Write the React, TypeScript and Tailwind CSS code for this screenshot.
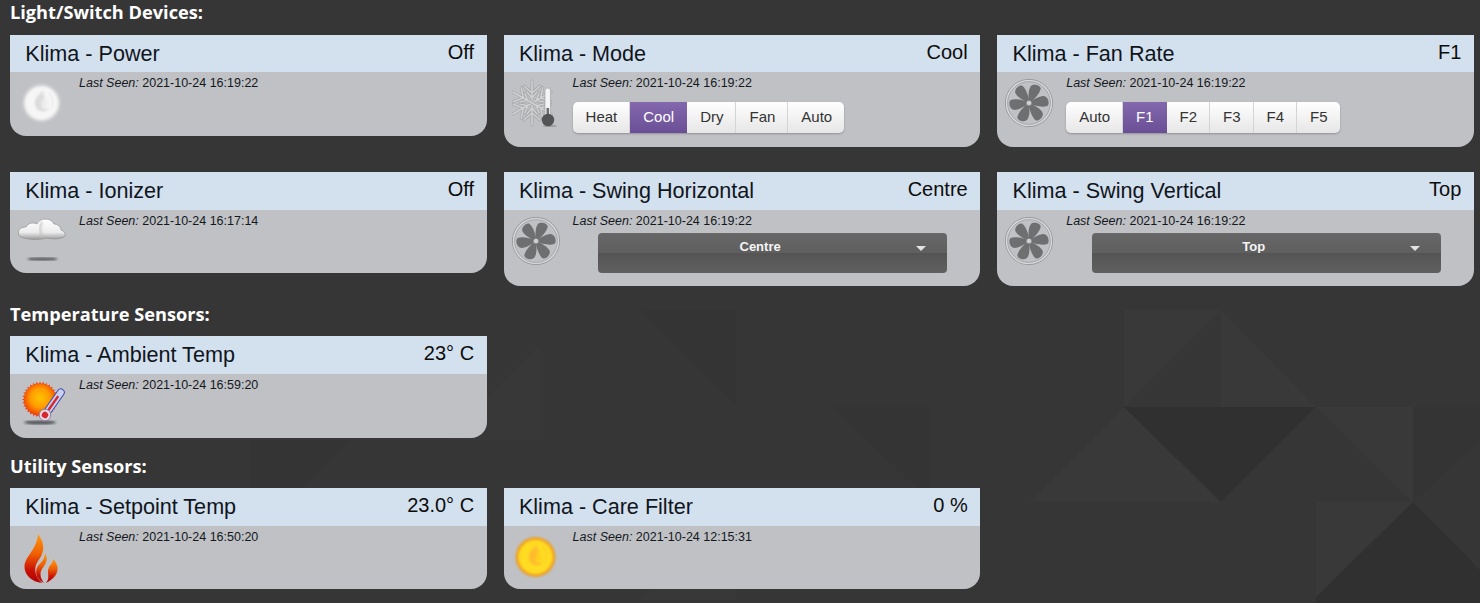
import type { ReactNode } from 'react';

function PageBackground() {
  return (
    <svg className="absolute inset-0 h-full w-full" viewBox="0 0 1480 603" preserveAspectRatio="none">
      <g fill="#393939">
        <path d="M1030 502 L1124 407 L1221 502 Z" />
        <path d="M1221 310 L1316 407 L1221 407 Z" />
        <path d="M1316 502 L1413 502 L1316 597 Z" />
        <path d="M1124 407 L1221 310 L1124 310 Z" />
        <path d="M1316 407 L1413 407 L1413 502 Z" />
      </g>
      <g fill="#383838">
        <path d="M640 600 L736 505 L736 600 Z" />
        <path d="M445 440 L540 345 L540 440 Z" />
      </g>
      <g fill="#303030">
        <path d="M1124 407 L1316 407 L1221 502 Z" />
        <path d="M1316 597 L1413 502 L1480 570 L1480 603 L1316 603 Z" />
      </g>
      <g fill="#343434">
        <path d="M1413 407 L1480 407 L1480 440 L1413 502 Z" />
        <path d="M640 310 L736 310 L736 405 Z" />
        <path d="M830 405 L930 405 L930 500 Z" />
        <path d="M250 440 L350 440 L250 540 Z" />
      </g>
    </svg>
  );
}

function OrbIcon({ id, light, mid, edge, swirl }: { id: string; light: string; mid: string; edge: string; swirl: string }) {
  return (
    <svg viewBox="0 0 48 48" className="h-12 w-12">
      <defs>
        <radialGradient id={`${id}-g`} cx="50%" cy="50%" r="50%">
          <stop offset="0%" stopColor={mid} />
          <stop offset="45%" stopColor={light} />
          <stop offset="85%" stopColor={light} />
          <stop offset="100%" stopColor={edge} />
        </radialGradient>
        <filter id={`${id}-b`}>
          <feGaussianBlur stdDeviation="0.9" />
        </filter>
      </defs>
      <circle cx="23.5" cy="24" r="20" fill={edge} opacity="0.7" filter={`url(#${id}-b)`} />
      <circle cx="23.5" cy="24" r="18.5" fill={`url(#${id}-g)`} filter={`url(#${id}-b)`} />
      <path
        d="M25 12 C19 16 15 22 18 28 C20 33 27 35 32 29 C28 31 23 30 22 25 C22 21 28 20 26 16 Z"
        fill={swirl}
        opacity="0.5"
        filter={`url(#${id}-b)`}
      />
      <path d="M31 14 C35 19 36 24 34 28" fill="none" stroke={swirl} strokeWidth="1.2" opacity="0.35" filter={`url(#${id}-b)`} />
    </svg>
  );
}

function FanIcon() {
  const angles = [-35, 25, 85, 145, 205, 265];
  return (
    <svg viewBox="0 0 48 48" className="h-12 w-12">
      <circle cx="24" cy="24" r="23.6" fill="none" stroke="#8f9092" strokeWidth="0.8" />
      <circle cx="24" cy="24" r="22.4" fill="none" stroke="#d8d9da" strokeWidth="1.4" />
      <circle cx="24" cy="24" r="21.4" fill="none" stroke="#949597" strokeWidth="0.6" />
      {angles.map((a) => (
        <path
          key={a}
          d="M24 24 C21.5 20 17.5 13 18.5 8 C19.5 4.5 26.5 3 28.5 6 C30 11 27 19 24.8 24 Z"
          fill="#6e6f71"
          transform={`rotate(${a} 24 24)`}
        />
      ))}
      <circle cx="24" cy="24" r="2.6" fill="#cfd0d2" stroke="#808183" strokeWidth="0.5" />
    </svg>
  );
}

function SnowThermoIcon() {
  const arms = [0, 60, 120];
  return (
    <svg viewBox="0 0 48 48" className="h-12 w-12">
      <g fill="none" strokeLinecap="round">
        {arms.map((a) => (
          <g key={a} transform={`rotate(${a} 20 24)`}>
            <path d="M20 2 V46 M12 7 L20 14 L28 7 M12 41 L20 34 L28 41 M15 13 L20 19 L25 13 M15 35 L20 29 L25 35" stroke="#a7a8aa" strokeWidth="3" />
            <path d="M20 2 V46 M12 7 L20 14 L28 7 M12 41 L20 34 L28 41 M15 13 L20 19 L25 13 M15 35 L20 29 L25 35" stroke="#cfd0d1" strokeWidth="1.5" />
          </g>
        ))}
      </g>
      <ellipse cx="38" cy="47" rx="7" ry="1" fill="#9a9b9d" />
      <rect x="33" y="9" width="5.5" height="32" rx="2.7" fill="#f4f4f4" stroke="#9c9d9f" strokeWidth="0.6" />
      <rect x="34.5" y="29" width="2.6" height="10" fill="#6a6b6d" />
      <circle cx="36" cy="41" r="6.2" fill="#535456" />
    </svg>
  );
}

function CloudIcon() {
  return (
    <svg viewBox="0 0 48 48" className="h-12 w-12">
      <defs>
        <linearGradient id="cloud-g" x1="0" y1="0" x2="0" y2="1">
          <stop offset="0%" stopColor="#ffffff" />
          <stop offset="65%" stopColor="#ececec" />
          <stop offset="100%" stopColor="#9c9c9c" />
        </linearGradient>
        <filter id="cloud-b">
          <feGaussianBlur stdDeviation="1.1" />
        </filter>
      </defs>
      <path
        d="M0.5 16 C0 12 4 10 8 10 C10 6 15 5 19 7 C21 1 33 0 36 7 C40 7 43 10 43 13 C46 14 48 17 47 19 C43 23 33 22 29 21 C23 23 9 23 3 20 C1.5 19 0.5 18 0.5 16 Z"
        fill="url(#cloud-g)"
        stroke="#8a8a8a"
        strokeWidth="0.6"
      />
      <path d="M24 5 C21 10 22 17 25 21" fill="none" stroke="#bdbdbd" strokeWidth="1.6" filter="url(#cloud-b)" />
      <ellipse cx="24.5" cy="42" rx="15" ry="1.6" fill="#555555" filter="url(#cloud-b)" />
    </svg>
  );
}

function SunThermoIcon() {
  const rays = Array.from({ length: 32 }, (_, i) => (i * 360) / 32);
  return (
    <svg viewBox="0 0 48 48" className="h-12 w-12">
      <defs>
        <radialGradient id="sun-g" cx="50%" cy="45%" r="55%">
          <stop offset="0%" stopColor="#ffc400" />
          <stop offset="55%" stopColor="#ff9a00" />
          <stop offset="100%" stopColor="#ee3c06" />
        </radialGradient>
        <filter id="sun-b">
          <feGaussianBlur stdDeviation="1" />
        </filter>
      </defs>
      <ellipse cx="22" cy="41.5" rx="16" ry="2" fill="#55575a" filter="url(#sun-b)" />
      {rays.map((r) => (
        <path key={r} d="M22 0.5 L23.5 4 L20.5 4 Z" fill="#f52c10" transform={`rotate(${r} 22 18.5)`} />
      ))}
      <circle cx="22" cy="18.5" r="16.2" fill="url(#sun-g)" />
      <g transform="rotate(35 27 34)">
        <rect x="23.5" y="3" width="7" height="28" rx="3.5" fill="#c9d0ee" stroke="#3d48a8" strokeWidth="1" />
        <rect x="25.8" y="11" width="2.4" height="20" fill="#d8272c" />
        <circle cx="27" cy="34" r="5.8" fill="#e4d8e2" stroke="#8b7fa8" strokeWidth="0.9" />
        <circle cx="27" cy="34" r="3.2" fill="#d8272c" />
      </g>
    </svg>
  );
}

function FlameIcon() {
  return (
    <svg viewBox="0 0 48 56" className="h-[56px] w-12">
      <defs>
        <linearGradient id="flame-g" x1="0" y1="0" x2="0" y2="1">
          <stop offset="0%" stopColor="#ff9a0c" />
          <stop offset="40%" stopColor="#f06004" />
          <stop offset="75%" stopColor="#c80f04" />
          <stop offset="100%" stopColor="#b00404" />
        </linearGradient>
      </defs>
      <path
        fill="url(#flame-g)"
        d="M20 1 C28 12 26 20 20 28 C15 35 17 44 24 50 C14 49 6 42 6.5 33 C7 23 19 17 20 1 Z"
      />
      <path
        fill="url(#flame-g)"
        d="M27 20 C31 27 27 32 24 36 C21 41 23 46 26 50 C20 47 17 42 18.5 36 C20 30 27 29 27 20 Z"
      />
      <path
        fill="url(#flame-g)"
        d="M35 26 C42 33 42 43 28 50 C33 44 28 40 31 34 C33 31 35 30 35 26 Z"
      />
    </svg>
  );
}

function ButtonGroup({ items, active }: { items: string[]; active: string }) {
  return (
    <div className="mt-[11px] flex w-fit rounded-[5px] shadow-[0_1px_2px_rgba(0,0,0,0.25)]">
      {items.map((item) => (
        <span
          key={item}
          className={
            item === active
              ? 'flex h-[31px] items-center bg-gradient-to-b from-[#8468ad] to-[#6a4f96] px-[13px] text-[15px] text-white'
              : 'flex h-[31px] items-center border-r border-[#d4d4d4] bg-gradient-to-b from-[#ffffff] to-[#e6e6e6] pl-[13px] pr-[12px] text-[15px] text-[#333333] first:rounded-l-[5px] last:rounded-r-[5px] last:border-r-0'
          }
        >
          {item}
        </span>
      ))}
    </div>
  );
}

function SelectBox({ value }: { value: string }) {
  return (
    <div className="relative ml-[25.5px] mt-[4.2px] flex h-10 w-[349px] flex-col overflow-hidden rounded-[4px] text-center">
      <div className="h-5 bg-gradient-to-b from-[#676767] to-[#5f5f5f] pr-[25px] pt-[5px] text-[13px] font-bold leading-[17px] text-[#f4f4f4]">
        {value}
      </div>
      <div className="h-5 bg-gradient-to-b from-[#545454] to-[#606060]" />
      <span className="absolute right-[21px] top-[13px] h-0 w-0 border-x-[5px] border-t-[5px] border-x-transparent border-t-[#e2e2e2]" />
    </div>
  );
}

function Card({
  title,
  value,
  seen,
  icon,
  children,
  bodyClass,
}: {
  title: string;
  value: string;
  seen: string;
  icon: ReactNode;
  children?: ReactNode;
  bodyClass: string;
}) {
  return (
    <div className="self-start overflow-hidden rounded-b-[16px] bg-[#bfc1c5] font-['Liberation_Sans',sans-serif]">
      <div className="flex h-[37.5px] items-start justify-between bg-[#d3e0ee] pl-[15.3px] pr-[12.5px] text-[#10151c]">
        <span className="pt-[6px] text-[21.6px] leading-[26px]">{title}</span>
        <span className="pt-[5px] text-[20px] leading-[24px] text-[#0c0c0c]">{value}</span>
      </div>
      <div className={bodyClass}>
        <div className="ml-2 mt-[7px] h-12 w-12 shrink-0">{icon}</div>
        <div className="ml-[13px] min-w-0 flex-1">
          <p className="pt-[3px] text-[12.5px] leading-[16px] text-[#14181d]">
            <em>Last Seen:</em> {seen}
          </p>
          {children}
        </div>
      </div>
    </div>
  );
}

function SectionTitle({ children, first }: { children: string; first?: boolean }) {
  return (
    <h2
      className={
        first
          ? "mb-[12.6px] mt-[2px] font-['Open_Sans',sans-serif] text-[18.2px] font-bold leading-[20px] text-white"
          : "mb-3 mt-[17.7px] pb-[0.3px] font-['Open_Sans',sans-serif] text-[18.2px] font-bold leading-[20px] text-white"
      }
    >
      {children}
    </h2>
  );
}

const modes = ['Heat', 'Cool', 'Dry', 'Fan', 'Auto'];
const rates = ['Auto', 'F1', 'F2', 'F3', 'F4', 'F5'];

export default function App() {
  return (
    <main className="relative h-[603px] w-[1480px] overflow-hidden bg-[#363636]">
      <PageBackground />
      <div className="relative pl-[10px]">
        <SectionTitle first>Light/Switch Devices:</SectionTitle>
        <div className="grid grid-cols-[476.6px_476.6px_476.6px] gap-x-[17px] gap-y-[25.4px]">
          <Card bodyClass="flex h-[63.9px]" title="Klima - Power" value="Off" seen="2021-10-24 16:19:22" icon={<OrbIcon id="power" light="#f6f6f6" mid="#e6e6e6" edge="#c9cacc" swirl="#c6c7c9" />} />
          <Card bodyClass="flex h-[74.9px]" title="Klima - Mode" value="Cool" seen="2021-10-24 16:19:22" icon={<SnowThermoIcon />}>
            <ButtonGroup items={modes} active="Cool" />
          </Card>
          <Card bodyClass="flex h-[74.9px]" title="Klima - Fan Rate" value="F1" seen="2021-10-24 16:19:22" icon={<FanIcon />}>
            <ButtonGroup items={rates} active="F1" />
          </Card>
          <Card bodyClass="flex h-[63.5px]" title="Klima - Ionizer" value="Off" seen="2021-10-24 16:17:14" icon={<CloudIcon />} />
          <Card bodyClass="flex h-[76.5px]" title="Klima - Swing Horizontal" value="Centre" seen="2021-10-24 16:19:22" icon={<FanIcon />}>
            <SelectBox value="Centre" />
          </Card>
          <Card bodyClass="flex h-[76.5px]" title="Klima - Swing Vertical" value="Top" seen="2021-10-24 16:19:22" icon={<FanIcon />}>
            <SelectBox value="Top" />
          </Card>
        </div>

        <SectionTitle>Temperature Sensors:</SectionTitle>
        <div className="grid grid-cols-[476.6px_476.6px_476.6px] gap-x-[17px]">
          <Card bodyClass="flex h-[64.5px]" title="Klima - Ambient Temp" value="23° C" seen="2021-10-24 16:59:20" icon={<SunThermoIcon />} />
        </div>

        <SectionTitle>Utility Sensors:</SectionTitle>
        <div className="grid grid-cols-[476.6px_476.6px_476.6px] gap-x-[17px]">
          <Card bodyClass="flex h-[63.5px]" title="Klima - Setpoint Temp" value="23.0° C" seen="2021-10-24 16:50:20" icon={<FlameIcon />} />
          <Card bodyClass="flex h-[63.5px]" title="Klima - Care Filter" value="0 %" seen="2021-10-24 12:15:31" icon={<OrbIcon id="care" light="#ffdc24" mid="#ffc21f" edge="#f39a12" swirl="#ffa63a" />} />
        </div>
      </div>
    </main>
  );
}
